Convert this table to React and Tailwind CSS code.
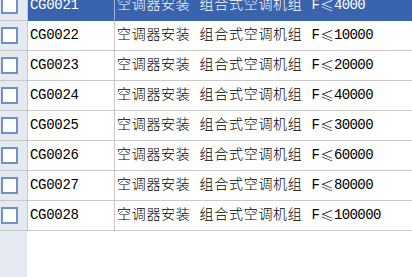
const rows = [
  { code: 'CG0021', limit: '4000' },
  { code: 'CG0022', limit: '10000' },
  { code: 'CG0023', limit: '20000' },
  { code: 'CG0024', limit: '40000' },
  { code: 'CG0025', limit: '30000' },
  { code: 'CG0026', limit: '60000' },
  { code: 'CG0027', limit: '80000' },
  { code: 'CG0028', limit: '100000' },
]

const font = { fontFamily: '"Liberation Mono", "Noto Sans CJK SC", monospace' }

export default function App() {
  return (
    <div className="flex h-[277px] w-[412px] flex-col overflow-hidden bg-white text-[14px] text-black" style={font}>
      <div className="-mt-[9px] flex flex-col">
        {rows.map((r, i) => {
          const sel = i === 0
          return (
            <div key={r.code} className="flex h-[30px] shrink-0">
              <div className="flex w-[28px] shrink-0 items-center border-b border-r border-[#c8c8c8] bg-[#e4e9f2]">
                <span className="ml-[1px] h-[17px] w-[17px] border-2 border-[#7190c6] bg-white" />
              </div>
              <div
                className={`flex w-[87px] shrink-0 items-center border-b border-r pl-[2px] tracking-[-0.3px] ${
                  sel ? 'border-b-[#3963ac] border-r-[#9fb3d6] bg-[#3963ac] text-white' : 'border-[#c8c8c8]'
                }`}
              >
                {r.code}
              </div>
              <div
                className={`flex flex-1 items-center whitespace-nowrap border-b pl-[2px] ${
                  sel ? 'border-[#3963ac] bg-[#3963ac] text-white' : 'border-[#c8c8c8]'
                }`}
              >
                <span className="font-light tracking-[0.7px]">空调器安装 组合式空调机组</span>
                <span className="ml-[9px]">F</span>
                <span className="font-light" style={{ fontFamily: '"Noto Sans CJK SC", sans-serif' }}>≤</span>
                <span className="tracking-[-0.6px]">{r.limit}</span>
              </div>
            </div>
          )
        })}
      </div>
      <div className="flex flex-1">
        <div className="w-[27px] bg-[#e4e9f2]" />
      </div>
    </div>
  )
}
